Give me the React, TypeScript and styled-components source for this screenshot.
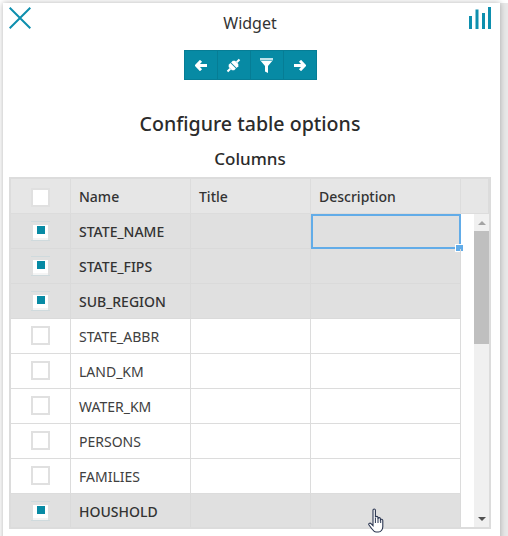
import React from "react";
import styled, { createGlobalStyle } from "styled-components";

const Global = createGlobalStyle`
  html, body { margin: 0; padding: 0; background: #fff; }
  body { font-family: "Noto Sans", "Open Sans", sans-serif; color: #2b2b2b; }
`;
const Page = styled.div`
  width: 508px; height: 536px; overflow: hidden; display: flex; padding: 3px 0 0 3px; box-sizing: border-box; background: #fff; position: relative;
`;
const Panel = styled.div`
  width: 497px; height: 560px; flex: none; box-sizing: border-box; padding-right: 3px; background: #fff; display: flex; flex-direction: column;
  box-shadow: 0 0 6px rgba(0,0,0,.3), 8px 0 0 rgba(0,0,0,.09);
`;
const TopBar = styled.div`
  height: 47px; flex: none; display: flex; justify-content: space-between; align-items: flex-start; padding: 4px 6px 0 6px; box-sizing: border-box;
`;
const Caption = styled.div`
  font-size: 16px; line-height: 22px; margin-top: 5px; color: #333;
`;
const Tools = styled.div`
  align-self: center; display: flex; height: 30px; background: #078aa4; border: 1px solid #067d95; box-sizing: border-box;
`;
const Tool = styled.div`
  width: 33px; box-sizing: border-box; display: flex; align-items: center; justify-content: center; border-left: 1px solid #067d95;
  &:first-child { border-left: 0; width: 32px; }
`;
const Heading = styled.h1`
  margin: 29px 0 0; font-size: 19.6px; line-height: 30px; font-weight: 500; text-align: center; color: #2b2b2b;
`;
const SubHeading = styled.h2`
  margin: 8px 0 0; font-size: 17px; line-height: 24px; font-weight: 500; text-align: center; color: #2b2b2b;
`;
const Grid = styled.div`
  margin: 6px 0 0 6px; width: 482px; height: 352px; flex: none; box-sizing: border-box; border: 2px solid #dcdcdc; display: flex; flex-direction: column; overflow: hidden;
`;
const Row = styled.div<{ $sel?: boolean }>`
  display: grid; grid-template-columns: 60px 120px 120px 150px 1fr; height: 35px; flex: none;
  background: ${p => (p.$sel ? "#e0e0e0" : "#fff")};
`;
const HeadRow = styled(Row)`
  background: #e6e6e6;
`;
const Rows = styled.div`
  display: flex; flex: 1; min-height: 0; position: relative;
`;
const Body = styled.div`
  width: 450px; flex: none; display: flex; flex-direction: column;
`;
const BodyRow = styled(Row)`
  grid-template-columns: 60px 120px 120px 150px;
`;
const Cell = styled.div<{ $sel?: boolean; $head?: boolean }>`
  box-sizing: border-box; height: 35px; display: flex; align-items: center; padding-left: 8px; font-size: 14px;
  font-weight: ${p => (p.$sel || p.$head ? 500 : 400)}; color: ${p => (p.$sel || p.$head ? "#333" : "#404040")};
  border-right: 1px solid ${p => (p.$sel ? "#dadada" : "#dcdcdc")};
  border-bottom: 1px solid ${p => (p.$sel ? "#dadada" : "#dcdcdc")};
  position: relative;
`;
const CheckCell = styled(Cell)`
  padding: 0; justify-content: center;
`;
const Check = styled.div<{ $on?: boolean; $head?: boolean }>`
  width: 19px; flex: none; box-sizing: border-box; display: flex; align-items: center; justify-content: center;
  height: ${p => (p.$on ? 20 : 19)}px;
  margin-top: ${p => (p.$head ? 3 : -1)}px;
  background: #fff;
  ${p => p.$on
    ? `border-top: 1px solid #cfdadd; border-bottom: 1px solid #cfdadd;
       box-shadow: inset 2px 0 0 #e0e0e0, inset -2px 0 0 #e0e0e0, inset 0 3px 0 #e0e0e0, inset 0 -2px 0 #f4f4f4;`
    : `border: 2px solid #e0e0e0;`}
  &::after { content: ""; width: 8px; height: 8px; margin-bottom: 2px; background: ${p => (p.$on ? "#078aa4" : "transparent")}; }
`;
const Selection = styled.div`
  position: absolute; left: 0; top: 0; right: -1px; bottom: -1px; border: 2px solid #62ace8; pointer-events: none;
  &::after { content: ""; position: absolute; right: -5px; bottom: -5px; width: 7px; height: 6px; background: #62ace8; border: 1px solid #fff; }
`;
const Scroll = styled.div`
  flex: 1; display: flex; justify-content: flex-end; background: #fff;
`;
const Track = styled.div`
  width: 15px; background: #f0f0f0; display: flex; flex-direction: column; align-items: center;
`;
const Arrow = styled.div<{ $down?: boolean }>`
  height: 17px; flex: none; display: flex; align-items: center; justify-content: center;
  &::after { content: ""; border-left: 4px solid transparent; border-right: 4px solid transparent;
    ${p => (p.$down ? "border-top: 4px solid #505050;" : "border-bottom: 4px solid #a3a3a3;")} }
`;
const Thumb = styled.div`
  width: 15px; height: 113px; background: #bfbfbf; flex: none;
`;
const Spacer = styled.div`
  flex: 1;
`;
const Pointer = styled.svg`
  position: absolute; left: 368px; top: 508px; pointer-events: none;
`;

const rows = [
  ["STATE_NAME", true], ["STATE_FIPS", true], ["SUB_REGION", true], ["STATE_ABBR", false], ["LAND_KM", false],
  ["WATER_KM", false], ["PERSONS", false], ["FAMILIES", false], ["HOUSHOLD", true],
] as [string, boolean][];

const ArrowIcon = ({ flip }: { flip?: boolean }) => (
  <svg width="12" height="11" viewBox="0 0 12 11" style={flip ? { transform: "scaleX(-1)" } : undefined}>
    <path d="M6 .8 1.6 5.5 6 10.2M2.5 5.5H12" fill="none" stroke="#fff" strokeWidth="2.9" />
  </svg>
);

export default function App() {
  return (
    <Page>
      <Global />
      <Panel>
        <TopBar>
          <svg width="22" height="22" viewBox="0 0 22 22">
            <path d="M.7.7 21.3 21.3M21.3.7.7 21.3" stroke="#0e8fae" strokeWidth="2" fill="none" />
          </svg>
          <Caption>Widget</Caption>
          <svg width="22" height="22" viewBox="0 0 22 22">
            <path d="M1.5 9v13M8 2.5V22M14.5 6v16M20.5 0v22" stroke="#0e8fae" strokeWidth="3" fill="none" />
          </svg>
        </TopBar>
        <Tools>
          <Tool><ArrowIcon /></Tool>
          <Tool>
            <svg width="15" height="15" viewBox="0 0 15 15">
              <g transform="rotate(-45 7.5 7.5)" fill="#fff">
                <path d="M-1 6.5H3v2H-1zM12 6.5h4v2h-4z" />
                <path d="M3 5.2 4.6 3.6H7v7.8H4.6L3 9.8Z" />
                <path d="M8 3.6h2.4L12 5.2v4.6l-1.6 1.6H8Z" />
              </g>
            </svg>
          </Tool>
          <Tool>
            <svg width="13" height="15" viewBox="0 0 13 15">
              <path d="M0 0h13v2.5H0z" fill="#bfe2ea" />
              <path d="M.8 3h11.4L8 8v7L5 13.4V8Z" fill="#fff" />
            </svg>
          </Tool>
          <Tool><ArrowIcon flip /></Tool>
        </Tools>
        <Heading>Configure table options</Heading>
        <SubHeading>Columns</SubHeading>
        <Grid>
          <HeadRow>
            <CheckCell $head><Check $head /></CheckCell>
            <Cell $head>Name</Cell>
            <Cell $head>Title</Cell>
            <Cell $head>Description</Cell>
            <Cell $head />
          </HeadRow>
          <Rows>
            <Body>
              {rows.map(([name, sel], i) => (
                <BodyRow key={name} $sel={sel}>
                  <CheckCell $sel={sel}><Check $on={sel} /></CheckCell>
                  <Cell $sel={sel}>{name}</Cell>
                  <Cell $sel={sel} />
                  <Cell $sel={sel}>{i === 0 && <Selection />}</Cell>
                </BodyRow>
              ))}
            </Body>
            <Scroll>
              <Track>
                <Arrow />
                <Thumb />
                <Spacer />
                <Arrow $down />
              </Track>
            </Scroll>
          </Rows>
        </Grid>
      </Panel>
      <Pointer width="18" height="25" viewBox="0 0 18 25">
        <path d="M5 2.2c0-1.6 2.4-1.6 2.4 0V9.5c.2-1.5 2.4-1.6 2.6 0v1c.4-1.3 2.3-1.1 2.4.3v1c.6-1 2.4-.7 2.4.8v6.2c0 2.3-1.6 5.2-4.4 5.2H8c-1.8 0-3-1.6-4-3l-3-4c-.8-1.2.8-2.6 2-1.4l2 2Z" fill="#fff" stroke="#2a3550" strokeWidth="1.1" />
        <path d="M7.4 10v5M10 10v5M12.7 11v4" stroke="#2a3550" strokeWidth="1" />
      </Pointer>
    </Page>
  );
}
